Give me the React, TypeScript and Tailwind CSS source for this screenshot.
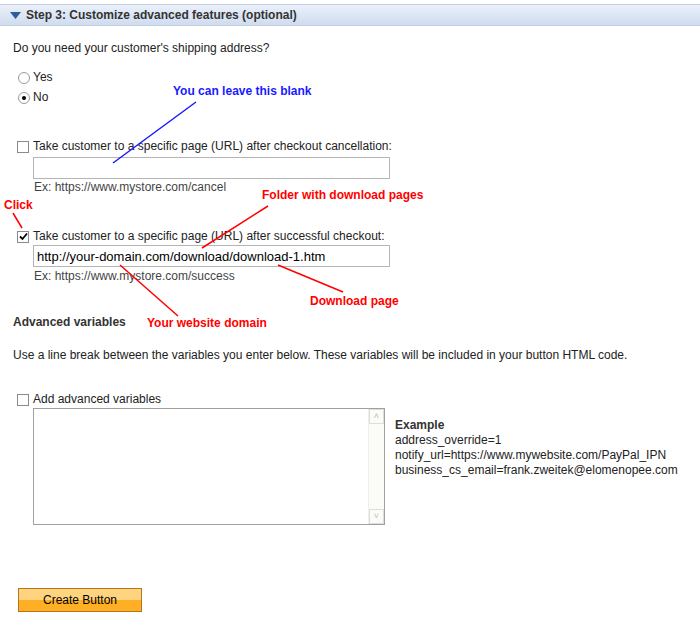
import React from 'react'

const font = { fontFamily: '"Liberation Sans", Arial, sans-serif' }

function Radio({ checked }: { checked?: boolean }) {
  return (
    <span className="inline-flex h-[12px] w-[12px] items-center justify-center rounded-full border border-[#9a9a9a] bg-white">
      {checked ? <span className="h-[4px] w-[4px] rounded-full bg-black" /> : null}
    </span>
  )
}

function Check({ checked }: { checked?: boolean }) {
  return (
    <span className="inline-flex h-[12px] w-[12px] items-center justify-center border border-[#8a8a8a] bg-white">
      {checked ? (
        <svg width="9" height="9" viewBox="0 0 9 9">
          <path d="M1 4.5 L3.5 7 L8 1.5" stroke="#000" strokeWidth="1.8" fill="none" />
        </svg>
      ) : null}
    </span>
  )
}

export default function App() {
  return (
    <div className="relative h-[625px] w-[700px] overflow-hidden bg-white text-[12px] leading-[15px] text-[#222]" style={font}>
      <div className="mt-[4px] flex h-[22px] items-center gap-[5px] border-y border-[#c3d0e3] bg-gradient-to-b from-[#eaf0f9] to-[#cfdcef] pl-[10px]">
        <svg width="11" height="7" viewBox="0 0 11 7"><path d="M0 0 H11 L5.5 7 Z" fill="#2d5d9f" /></svg>
        <span className="text-[12px] font-bold text-[#333]">Step 3: Customize advanced features (optional)</span>
      </div>
      <div className="pl-[13px]">
        <div className="mt-[15px]">Do you need your customer's shipping address?</div>
        <div className="mt-[14px] flex items-center gap-[3px] pl-[5px]"><Radio /> Yes</div>
        <div className="mt-[5px] flex items-center gap-[3px] pl-[5px]"><Radio checked /> No</div>
        <div className="mt-[34px] flex items-center gap-[4px] pl-[4px]"><Check /> Take customer to a specific page (URL) after checkout cancellation:</div>
        <div className="mt-[3px] ml-[20px] h-[22px] w-[357px] border border-[#b5b5b5]" />
        <div className="mt-[1px] ml-[21px] text-[#444]">Ex: https://www.mystore.com/cancel</div>
        <div className="mt-[34px] flex items-center gap-[4px] pl-[4px]"><Check checked /> Take customer to a specific page (URL) after successful checkout:</div>
        <div className="mt-[1px] ml-[20px] flex h-[22px] w-[357px] items-center border border-[#b5b5b5] px-[3px] text-[13px] text-black">
          http://your-domain.com/download/download-1.htm
        </div>
        <div className="mt-[2px] ml-[21px] text-[#444]">Ex: https://www.mystore.com/success</div>
        <div className="mt-[31px] font-bold text-[#333]">Advanced variables</div>
        <div className="mt-[18px]">Use a line break between the variables you enter below. These variables will be included in your button HTML code.</div>
        <div className="mt-[29px] flex items-center gap-[4px] pl-[4px]"><Check /> Add advanced variables</div>
        <div className="mt-[1px] ml-[20px] flex items-start gap-[10px]">
          <div className="flex h-[117px] w-[352px] justify-end border border-[#a0a0a0]">
            <div className="flex w-[16px] flex-col justify-between border-l border-[#eee] bg-[#fbfbf8]">
              <div className="flex h-[15px] items-center justify-center border border-[#ddd] text-[9px] text-[#bbb]">˄</div>
              <div className="flex h-[15px] items-center justify-center border border-[#ddd] text-[9px] text-[#bbb]">˅</div>
            </div>
          </div>
          <div className="mt-[10px] leading-[15px]">
            <div className="font-bold text-[#333]">Example</div>
            <div>address_override=1</div>
            <div>notify_url=https://www.mywebsite.com/PayPal_IPN</div>
            <div>business_cs_email=frank.zweitek@elomenopee.com</div>
          </div>
        </div>
        <button className="mt-[63px] ml-[5px] flex h-[24px] w-[124px] items-center justify-center border border-[#b8731f] bg-gradient-to-b from-[#ffd47e] from-50% to-[#ffaf23] to-50% text-[12px] text-black">
          Create Button
        </button>
      </div>

      <svg className="pointer-events-none absolute left-0 top-0" width="700" height="625">
        <line x1="113" y1="163" x2="196" y2="102" stroke="#1a1aff" strokeWidth="1.5" />
        <g stroke="#ff0000" strokeWidth="1.5">
          <line x1="13" y1="213" x2="22" y2="228" />
          <line x1="268" y1="206" x2="202" y2="248" />
          <line x1="278" y1="265" x2="343" y2="292" />
          <line x1="120" y1="265" x2="178" y2="316" />
        </g>
      </svg>
      <div className="absolute left-[173px] top-[84px] font-bold text-[#1a1aff]">You can leave this blank</div>
      <div className="absolute left-[4px] top-[198px] font-bold text-[#ff0000]">Click</div>
      <div className="absolute left-[262px] top-[188px] font-bold text-[#ff0000]">Folder with download pages</div>
      <div className="absolute left-[310px] top-[294px] font-bold text-[#ff0000]">Download page</div>
      <div className="absolute left-[147px] top-[316px] font-bold text-[#ff0000]">Your website domain</div>
    </div>
  )
}
